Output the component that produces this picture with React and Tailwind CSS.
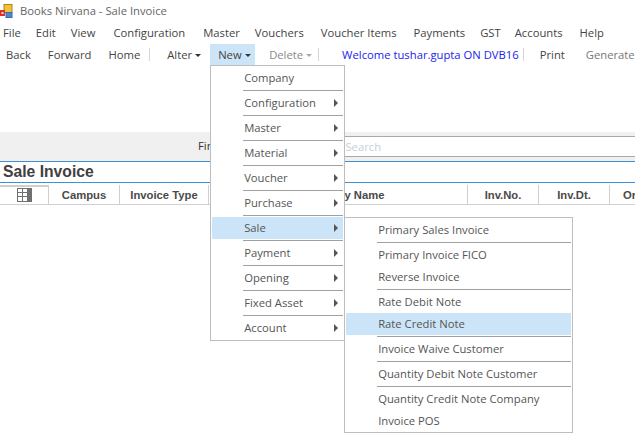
import React from 'react';

const font = "font-['Open_Sans','Noto_Sans',sans-serif]";

const menuBar = [
  ['File', 'ml-[3px]'],
  ['Edit', 'ml-[15px]'],
  ['View', 'ml-[15px]'],
  ['Configuration', 'ml-[18px]'],
  ['Master', 'ml-[18px]'],
  ['Vouchers', 'ml-[15px]'],
  ['Voucher Items', 'ml-[17px]'],
  ['Payments', 'ml-[17px]'],
  ['GST', 'ml-[15px]'],
  ['Accounts', 'ml-[14px]'],
  ['Help', 'ml-[17px]'],
];

const mainItems = [
  { label: 'Company', sep: true },
  { label: 'Configuration', arrow: true, sep: true },
  { label: 'Master', arrow: true, sep: true },
  { label: 'Material', arrow: true, sep: true },
  { label: 'Voucher', arrow: true, sep: true },
  { label: 'Purchase', arrow: true, sep: true },
  { label: 'Sale', arrow: true, sep: true, active: true, sub: true },
  { label: 'Payment', arrow: true, sep: true },
  { label: 'Opening', arrow: true, sep: true },
  { label: 'Fixed Asset', arrow: true, sep: true },
  { label: 'Account', arrow: true },
];

const saleItems = [
  { label: 'Primary Sales Invoice', sep: true },
  { label: 'Primary Invoice FICO' },
  { label: 'Reverse Invoice', sep: true },
  { label: 'Rate Debit Note' },
  { label: 'Rate Credit Note', sep: true, active: true },
  { label: 'Invoice Waive Customer', sep: true },
  { label: 'Quantity Debit Note Customer', sep: true },
  { label: 'Quantity Credit Note Company' },
  { label: 'Invoice POS' },
];

const columns = [
  ['Campus', 'w-[71px] justify-center'],
  ['Invoice Type', 'w-[89px] justify-center'],
  ['Party Name', 'w-[259px] justify-center pl-[31px]'],
  ['Inv.No.', 'w-[71px] justify-center'],
  ['Inv.Dt.', 'w-[71px] justify-center'],
];

const AppIcon = () => (
  <svg width="13" height="14" viewBox="0 0 13 14" className="shrink-0">
    <rect x="4" y="0.5" width="8" height="8" fill="#f4c430" stroke="#a8862a" />
    <rect x="6" y="8.5" width="6" height="5" fill="#4a86d8" stroke="#3a6ab0" />
    <rect x="0" y="6" width="5" height="6" fill="#d8322a" />
    <rect x="1.5" y="8" width="2" height="2" fill="#f3d0c8" />
  </svg>
);

const GridIcon = () => (
  <svg width="15" height="14" viewBox="0 0 15 14">
    <rect x="0" y="0" width="15" height="14" fill="#707070" />
    <rect x="1" y="1" width="4" height="3" fill="#fff" />
    <rect x="6" y="1" width="4" height="3" fill="#fff" />
    <rect x="1" y="5" width="4" height="3" fill="#fff" />
    <rect x="6" y="5" width="4" height="3" fill="#fff" />
    <rect x="1" y="9" width="4" height="4" fill="#fff" />
    <rect x="6" y="9" width="4" height="4" fill="#fff" />
  </svg>
);

const Caret = ({ color = 'border-t-[#333]' }) => (
  <span className={`ml-[3px] mt-[1px] inline-block border-x-[3px] border-t-[3px] border-x-transparent ${color}`} />
);

const Item = ({ item, children }) => (
  <>
    <div className={`relative flex h-[22px] items-center ${item.active ? 'bg-[#cce4f7]' : ''}`}>
      <span className="ml-[32px]">{item.label}</span>
      {item.arrow && (
        <span className="absolute right-[5px] top-[7px] border-y-[4px] border-l-[4px] border-y-transparent border-l-[#555]" />
      )}
      {children}
    </div>
    {item.sep && (
      <div className="flex h-[3px] items-center">
        <div className="ml-[31px] h-px flex-1 bg-[#a0a0a0]" />
      </div>
    )}
  </>
);

const SaleMenu = () => (
  <div className="absolute left-[132px] top-0 z-20 h-[216px] w-[229px] border border-[#bdbdbd] bg-white p-px text-[#555]">
    {saleItems.map((item) => (
      <Item key={item.label} item={item} />
    ))}
  </div>
);

const NewMenu = () => (
  <div className="absolute left-0 top-[21px] z-10 h-[276px] w-[135px] border border-[#bdbdbd] bg-white p-px text-[#555]">
    {mainItems.map((item) => (
      <Item key={item.label} item={item}>
        {item.sub && <SaleMenu />}
      </Item>
    ))}
  </div>
);

const Divider = ({ className }) => <span className={`h-[13px] w-px bg-[#d5d5d5] ${className}`} />;

export default function App() {
  return (
    <div className={`${font} relative h-[443px] w-[635px] overflow-hidden bg-white text-[11.25px] text-[#444]`}>
      {/* title bar */}
      <div className="flex h-[22px] items-center">
        <AppIcon />
        <span className="ml-[7px] text-[#666]">Books Nirvana - Sale Invoice</span>
      </div>

      {/* menu bar */}
      <div className="flex h-[22px] items-center whitespace-nowrap">
        {menuBar.map(([label, gap]) => (
          <span key={label} className={gap}>{label}</span>
        ))}
      </div>

      {/* toolbar */}
      <div className="flex h-[21px] items-center whitespace-nowrap">
        <span className="ml-[6px] pt-px">Back</span>
        <span className="ml-[17px] pt-px">Forward</span>
        <span className="ml-[17px] pt-px">Home</span>
        <Divider className="ml-[9px]" />
        <span className="ml-[17px] flex items-center pt-px">Alter<Caret /></span>
        <div className="relative ml-[9px] flex h-[21px] w-[45px] shrink-0 items-center bg-[#cce4f7] pl-[8px] pt-px">
          New<Caret />
          <NewMenu />
        </div>
        <span className="ml-[14px] flex items-center pt-px text-[#888]">Delete<Caret color="border-t-[#aaa]" /></span>
        <Divider className="ml-[6px]" />
        <span className="ml-[23px] pt-px text-[#2222ee]">Welcome tushar.gupta ON DVB16</span>
        <Divider className="ml-[4px]" />
        <span className="ml-[16px] pt-px">Print</span>
        <span className="ml-[21px] pt-px text-[#777]">Generate</span>
      </div>

      {/* filter band */}
      <div className="mt-[67px] flex h-[29px] items-center bg-[#f0f0f0] pl-[198px]">
        <span className="text-[#333]">Find</span>
        <div className="ml-[20px] flex h-[21px] flex-1 items-center border-y border-[#a9a9a9] bg-white pl-[105px] pt-px text-[#c4d0de]">
          Search
        </div>
      </div>

      {/* page title */}
      <div className="flex h-[22px] items-center border-y border-[#3d8fd6] pl-[3px] font-['Liberation_Sans',sans-serif] text-[15.7px] font-bold text-[#404040]">
        Sale Invoice
      </div>

      {/* grid header */}
      <div className="mt-[2px] flex h-[20px] items-stretch whitespace-nowrap border-b border-[#cfcfcf] font-['Liberation_Sans',sans-serif] text-[11.25px] font-bold text-[#4a4a4a]">
        <div className="flex w-[49px] shrink-0 items-center justify-center border-r border-t-2 border-[#cfcfcf] pb-[2px]"><GridIcon /></div>
        {columns.map(([label, width]) => (
          <div key={label} className={`flex shrink-0 items-center border-r border-[#cfcfcf] pt-[2px] ${width}`}>{label}</div>
        ))}
        <div className="flex items-center pl-[13px] pt-[2px]">Or</div>
      </div>
    </div>
  );
}
